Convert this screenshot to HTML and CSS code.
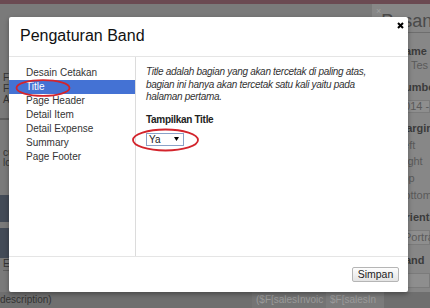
FILE: index.html
```html
<!DOCTYPE html>
<html lang="id">
<head>
<meta charset="utf-8">
<title>Pengaturan Band</title>
<link rel="stylesheet" href="styles.css">
</head>
<body>
<div class="page">
  <div class="topbar"></div>
  <div class="main">
    <div class="content">
      <div class="fields">
        <div>Faktur</div>
        <div>Faktur</div>
        <div>Alamat</div>
      </div>
      <div class="rule"></div>
      <div class="notes">
        <div>cu</div>
        <div>lo</div>
      </div>
      <div class="table-head"></div>
      <div class="table-band"></div>
      <div class="edit-row">Edit</div>
    </div>
    <aside class="side">
      <div class="side-head">
        <span class="side-close">×</span>
        <span class="side-title">Pesanan</span>
      </div>
      <div class="side-body">
        <div class="lbl first">Name</div>
        <div class="val">Tes</div>
        <div class="lbl gap">Number</div>
        <div class="box">2014 - 2015</div>
        <div class="lbl gap">Margin</div>
        <div class="opt">Left</div>
        <div class="opt">Right</div>
        <div class="opt">Top</div>
        <div class="opt">Bottom</div>
        <div class="lbl gap">Orientasi</div>
        <div class="box tall">Portrait</div>
        <div class="lbl gap">Band</div>
        <div class="box tall"></div>
      </div>
    </aside>
  </div>
  <div class="bottom-row">
    <span class="desc-cell">description)</span>
    <span class="cell">($F[salesInvoic</span>
    <span class="cell alt">$F[salesIn</span>
  </div>
</div>

<div class="modal">
  <div class="modal-header">
    <h3 class="modal-title">Pengaturan Band</h3>
    <svg class="close" width="7" height="7" viewBox="0 0 7 7"><path d="M1 1L6 6M6 1L1 6" stroke="#000" stroke-width="2"/></svg>
  </div>
  <div class="modal-body">
    <ul class="nav">
      <li>Desain Cetakan</li>
      <li class="active">Title</li>
      <li>Page Header</li>
      <li>Detail Item</li>
      <li>Detail Expense</li>
      <li>Summary</li>
      <li>Page Footer</li>
    </ul>
    <div class="pane">
      <p class="help">Title adalah bagian yang akan tercetak di paling atas, bagian ini hanya akan tercetak satu kali yaitu pada halaman pertama.</p>
      <div class="field-label">Tampilkan Title</div>
      <div class="select"><span>Ya</span><svg width="5" height="4" viewBox="0 0 5 4"><path d="M0 0H5L2.5 4Z" fill="#000"/></svg></div>
    </div>
  </div>
  <div class="modal-footer">
    <button class="btn">Simpan</button>
  </div>
</div>

<svg class="marks" width="430" height="308" viewBox="0 0 430 308">
  <ellipse cx="43" cy="88" rx="26.5" ry="7.8" fill="none" stroke="#d3242c" stroke-width="1.8"/>
  <ellipse cx="165.5" cy="140" rx="32.5" ry="10.5" fill="none" stroke="#d3242c" stroke-width="1.8"/>
</svg>
</body>
</html>
```
FILE: styles.css
```css
* { box-sizing: border-box; }
html, body { margin: 0; padding: 0; }
body {
  width: 430px;
  height: 308px;
  overflow: hidden;
  position: relative;
  font-family: "Liberation Sans", Arial, sans-serif;
  background: #7a7a7a;
}

/* background page (dimmed) */
.page { display: flex; flex-direction: column; height: 308px; }
.topbar { height: 4px; background: #6b4a52; flex: none; }
.main { flex: 1; display: flex; min-height: 0; }
.content {
  width: 372px;
  display: flex;
  flex-direction: column;
  background: #7a7a7a;
  font-size: 10px;
  color: #333;
  padding-left: 3px;
}
.fields { margin-top: 68px; line-height: 11px; }
.rule { margin-top: 13px; border-top: 2px solid #5e5e5e; margin-left: -3px; }
.notes { margin-top: 28px; line-height: 10px; }
.table-head { margin: 27px 0 0 -3px; height: 27px; background: #434b57; }
.table-band { margin: 6px 0 0 -3px; height: 30px; background: #434b57; }
.edit-row { line-height: 12px; border-bottom: 1px solid #5e5e5e; }

.side {
  width: 58px;
  background: #878787;
  display: flex;
  flex-direction: column;
  color: #3b3b3b;
  font-size: 11px;
}
.side-head {
  height: 29px;
  display: flex;
  align-items: flex-end;
  border-bottom: 1px solid #6e6e6e;
  padding-left: 4px;
  overflow: hidden;
  white-space: nowrap;
}
.side-close { align-self: flex-start; margin-top: 2px; font-size: 9px; color: #a0a0a0; width: 23px; }
.side-title { font-size: 18px; line-height: 22px; color: #4a4a4a; }
.side-body { padding-left: 25px; white-space: nowrap; overflow: hidden; }
.lbl { font-weight: bold; line-height: 14px; }
.lbl.first { margin-top: 11px; }
.lbl.gap { margin-top: 8px; }
.val { line-height: 14px; padding-left: 14px; color: #5a5a5a; }
.opt { line-height: 14px; margin-top: 2.7px; color: #5a5a5a; }
.box {
  margin-top: 6px;
  height: 13px;
  line-height: 11px;
  background: #8e8e8e;
  border: 1px solid #7b7b7b;
  color: #5a5a5a;
  padding-left: 0;
}
.box.tall { height: 15px; line-height: 13px; padding-left: 6px; }

.bottom-row {
  height: 16px;
  flex: none;
  display: flex;
  background: #6f6f6f;
  font-size: 10px;
  line-height: 16px;
  white-space: nowrap;
}
.desc-cell { width: 252px; color: #333; }
.cell { width: 74px; padding-left: 4px; color: #9a9a9a; background: #747474; overflow: hidden; }
.cell.alt { width: 58px; background: #7b7b7b; }

/* modal */
.modal {
  position: absolute;
  left: 9px;
  top: 17px;
  width: 399px;
  height: 275px;
  background: #fff;
  border-radius: 2px;
  box-shadow: 0 2px 5px rgba(0, 0, 0, 0.35);
  display: flex;
  flex-direction: column;
}
.modal-header {
  height: 40px;
  flex: none;
  border-bottom: 1px solid #e5e5e5;
  display: flex;
  justify-content: space-between;
  align-items: flex-start;
  padding: 9px 4px 0 11px;
}
.modal-title {
  margin: 0;
  font-size: 16px;
  line-height: 20px;
  font-weight: normal;
  color: #111;
}
.close { margin-top: -4px; }
.modal-body {
  flex: 1;
  display: grid;
  grid-template-columns: 127px 1fr;
  border-bottom: 1px solid #e5e5e5;
}
.nav {
  list-style: none;
  margin: 0;
  padding: 9px 0 0 0;
  border-right: 1px solid #dcdcdc;
  font-size: 10px;
  color: #333;
}
.nav li { height: 14px; line-height: 14px; padding-left: 17px; }
.nav li.active { background: #4472d4; color: #fff; }
.pane { padding: 9px 10px 0 10px; }
.help {
  margin: 0;
  max-width: 226px;
  font-style: italic;
  font-size: 10px;
  line-height: 12.5px;
  letter-spacing: -0.3px;
  color: #333;
}
.field-label {
  margin-top: 10px;
  font-weight: bold;
  font-size: 10px;
  line-height: 12px;
  letter-spacing: -0.3px;
  color: #222;
}
.select {
  margin-top: 7px;
  width: 38px;
  height: 13px;
  border: 1px solid #8aa2c8;
  display: flex;
  align-items: center;
  justify-content: space-between;
  padding: 0 4px 0 2px;
  font-size: 10px;
  color: #222;
}
.modal-footer {
  height: 35px;
  flex: none;
  display: flex;
  justify-content: flex-end;
  align-items: center;
  padding-right: 9px;
}
.btn {
  width: 47px;
  height: 15px;
  padding: 0;
  font-family: "Liberation Sans", Arial, sans-serif;
  font-size: 10.5px;
  line-height: 13px;
  color: #222;
  background: linear-gradient(#fdfdfd, #e4e4e4);
  border: 1px solid #b5b5b5;
  border-radius: 2px;
}

.marks { position: absolute; left: 0; top: 0; pointer-events: none; }
```
